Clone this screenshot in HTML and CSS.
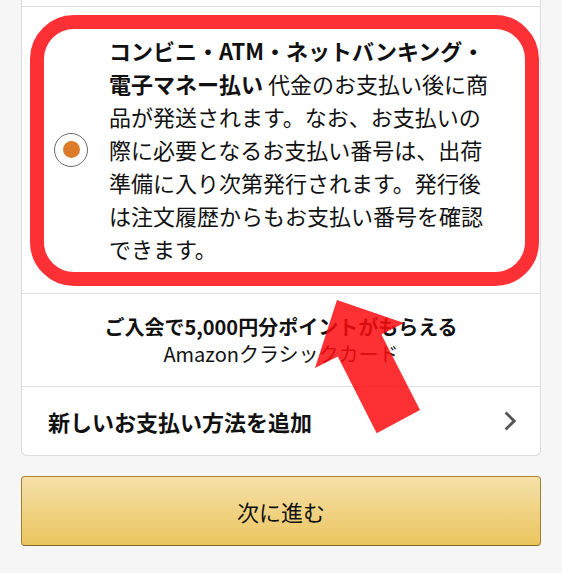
FILE: index.html
```html
<!DOCTYPE html>
<html lang="ja">
<head>
<meta charset="utf-8">
<link rel="stylesheet" href="styles.css">
</head>
<body>
<div class="page">
  <div class="card">
    <div class="row-stub"></div>
    <div class="row option">
      <span class="radio"><span class="radio-dot"></span></span>
      <p class="option-text"><b>コンビニ・ATM・ネットバンキング・電子マネー払い</b> 代金のお支払い後に商品が発送されます。なお、お支払いの際に必要となるお支払い番号は、出荷準備に入り次第発行されます。発行後は注文履歴からもお支払い番号を確認できます。</p>
      <div class="highlight"></div>
    </div>
    <div class="row promo">
      <p class="promo-title">ご入会で5,000円分ポイントがもらえる</p>
      <p class="promo-sub">Amazonクラシックカード</p>
    </div>
    <div class="row add">
      <span class="add-label">新しいお支払い方法を追加</span>
      <svg class="chevron" width="12" height="20" viewBox="0 0 12 20"><polyline points="1.6,1.6 10.2,10 1.6,18.4" fill="none" stroke="#555" stroke-width="2.8" stroke-linejoin="miter"/></svg>
    </div>
  </div>
  <button class="next-btn">次に進む</button>
  <svg class="arrow" width="562" height="573" viewBox="0 0 562 573"><polygon points="337,300 404,323 381.4,334.4 420,410 376.7,433.3 337.8,356.4 315,368" fill="#fd0c10" fill-opacity="0.85"/></svg>
</div>
</body>
</html>
```

FILE: styles.css
```css
* { box-sizing: border-box; }
html, body {
  margin: 0;
  padding: 0;
  background: #f6f6f6;
}
body {
  font-family: "Noto Sans CJK JP", "Noto Sans", sans-serif;
  color: #111;
}
.page {
  position: relative;
  width: 562px;
  height: 573px;
  padding: 0 21px;
  overflow: hidden;
}
.card {
  width: 520px;
  background: #fff;
  border: 1px solid #dcdcdc;
  border-top: none;
  border-radius: 0 0 6px 6px;
}
.row-stub {
  height: 7px;
  border-bottom: 1px solid #dedede;
}
.row {
  border-bottom: 1px solid #dedede;
}
.row:last-child { border-bottom: none; }
.option {
  position: relative;
  display: flex;
  align-items: center;
  padding: 27px 0 28px 32px;
}
.radio {
  flex: none;
  width: 34px;
  height: 34px;
  border-radius: 50%;
  border: 1.5px solid #6a6a6a;
  display: flex;
  align-items: center;
  justify-content: center;
}
.radio-dot {
  width: 17px;
  height: 17px;
  border-radius: 50%;
  background: #dc7b2c;
}
.option-text {
  margin: 0 0 0 21px;
  width: 386px;
  font-size: 22px;
  line-height: 33px;
}
.option-text b { font-weight: 700; }
.highlight {
  position: absolute;
  left: 8px;
  top: 8px;
  width: 509px;
  height: 271px;
  border: 14px solid #fd3035;
  border-radius: 44px;
}
.promo {
  padding: 19px 0;
  text-align: center;
  font-size: 20px;
  line-height: 27px;
}
.promo p { margin: 0; }
.promo-title { font-weight: 700; }
.add {
  height: 68px;
  display: flex;
  align-items: center;
  justify-content: space-between;
  padding: 0 24px 0 26px;
}
.add-label {
  font-size: 22px;
  font-weight: 700;
}
.chevron { display: block; }
.next-btn {
  display: block;
  margin-top: 20px;
  width: 520px;
  height: 70px;
  border: 1px solid #a88734;
  border-color: #a88734 #9c7e31 #846a29;
  border-radius: 4px;
  background: linear-gradient(to bottom, #f5e0a9, #ebc55e);
  font-family: "Noto Sans CJK JP", "Noto Sans", sans-serif;
  font-size: 22px;
  color: #111;
  padding: 0;
}
.arrow {
  position: absolute;
  left: 0;
  top: 0;
  pointer-events: none;
}
```
